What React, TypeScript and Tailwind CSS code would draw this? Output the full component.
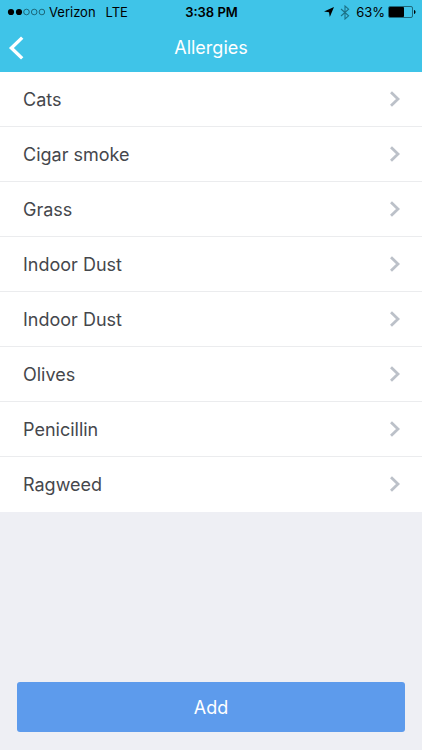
const allergies = [
    { id: 1, name: "Cats" },
    { id: 2, name: "Cigar smoke" },
    { id: 3, name: "Grass" },
    { id: 4, name: "Indoor Dust" },
    { id: 5, name: "Indoor Dust" },
    { id: 6, name: "Olives" },
    { id: 7, name: "Penicillin" },
    { id: 8, name: "Ragweed" },
]

const StatusBar = () => (
    <div className="grid grid-cols-[1fr_auto_1fr] items-center h-6 pl-[7px] pr-[6px] text-[13px] leading-6 text-black">
        <div className="flex items-center">
            <svg className="w-[38px] h-2" viewBox="0 0 38 8" aria-hidden="true">
                <circle cx="4" cy="4" r="3.1" />
                <circle cx="12" cy="4" r="3.1" />
                <g fill="none" stroke="#14505f" strokeWidth="0.8">
                    <circle cx="19.5" cy="4" r="2.8" />
                    <circle cx="27.2" cy="4" r="2.8" />
                    <circle cx="34.9" cy="4" r="2.8" />
                </g>
            </svg>
            <span className="ml-1">Verizon</span>
            <span className="ml-[10px]">LTE</span>
        </div>
        <span className="font-semibold">3:38 PM</span>
        <div className="flex items-center justify-end">
            <svg className="w-[10px] h-[10px]" viewBox="0 0 10 10" aria-hidden="true">
                <path d="M10 0 5.8 10 5 5.2 0 4.6Z" />
            </svg>
            <svg className="ml-[6px] w-[10px] h-[15px]" viewBox="0 0 10 15" fill="none" stroke="#1c7287" strokeWidth="1.1" aria-hidden="true">
                <path d="M1 4 8.6 10.8 5 14V1L8.6 4.2 1 11" />
            </svg>
            <span className="ml-[6px]">63%</span>
            <svg className="ml-[3px] w-7 h-3" viewBox="0 0 28 12" aria-hidden="true">
                <rect x="0.5" y="0.5" width="24" height="11" rx="1.5" fill="none" stroke="#14505f" strokeWidth="0.8" />
                <rect x="1" y="1" width="15" height="10" rx="0.8" />
                <path d="M26 4c1 .3 1.5 1 1.5 2s-.5 1.7-1.5 2Z" />
            </svg>
        </div>
    </div>
)

export default () => {
    return (
        <main className="flex flex-col min-h-screen bg-[#eeeff4] font-['Inter','Liberation_Sans',sans-serif]">
            <header className="bg-[#3fc4e8]">
                <StatusBar />
                <div className="grid grid-cols-[1fr_auto_1fr] items-center h-12 px-2">
                    <button type="button" aria-label="Back" className="justify-self-start py-2">
                        <svg className="w-4 h-6" viewBox="0 0 16 24" fill="none" stroke="white" strokeWidth="3.4">
                            <path d="M14.2 1.6 3.4 12l10.8 10.4" />
                        </svg>
                    </button>
                    <h1 className="text-lg leading-6 text-white">Allergies</h1>
                </div>
            </header>
            <ul className="bg-white">
                {allergies.map((item) => (
                    <li key={item.id} className="border-b border-[#ebecee] last:border-white">
                        <a href="#" className="flex items-center justify-between h-[54px] pl-[23px] pr-[21px] text-lg leading-6 text-[#45474c]">
                            <span className="pt-0.5">{item.name}</span>
                            <svg className="w-3 h-4" viewBox="0 0 12 16" fill="none" stroke="#bcc1c9" strokeWidth="2.8" aria-hidden="true">
                                <path d="M2 1.2 9 8l-7 6.8" />
                            </svg>
                        </a>
                    </li>
                ))}
            </ul>
            <div className="mt-auto px-[17px] pt-6 pb-[18px]">
                <button type="button" className="block w-full h-[50px] pt-0.5 rounded-[3px] bg-[#5d9bec] text-lg leading-6 text-white">
                    Add
                </button>
            </div>
        </main>
    )
}
